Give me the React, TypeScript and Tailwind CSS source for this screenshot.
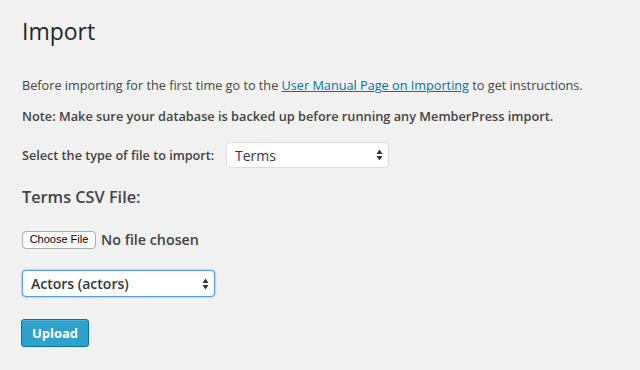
import React from "react";

function Arrows() {
  return (
    <svg width="7" height="12" viewBox="0 0 7 12" className="shrink-0">
      <path d="M3.5 0.5 L6.5 5 L0.5 5 Z" fill="#333" />
      <path d="M3.5 11.5 L6.5 7 L0.5 7 Z" fill="#333" />
    </svg>
  );
}

export default function App() {
  return (
    <div
      className="w-[640px] h-[370px] bg-[#f1f1f1] text-[#444] overflow-hidden"
      style={{ fontFamily: '"Open Sans", sans-serif' }}
    >
      <div className="pl-[22px] pt-[14px] flex flex-col items-start">
        <h2 className="text-[23px] leading-[34px] text-[#23282d] font-normal">Import</h2>
        <p className="mt-[27px] text-[12.7px] leading-[20px]">
          Before importing for the first time go to the{" "}
          <a href="#" className="text-[#0074a2] underline">User Manual Page on Importing</a> to get
          instructions.
        </p>
        <p className="mt-[11px] text-[12.75px] leading-[20px] font-semibold">
          Note: Make sure your database is backed up before running any MemberPress import.
        </p>
        <div className="mt-[16px] flex items-center">
          <span className="text-[12.65px] font-semibold w-[204px]">Select the type of file to import:</span>
          <div className="w-[163px] h-[26px] bg-white border border-[#ddd] rounded-[4px] flex items-center justify-between pl-[8px] pr-[5px]">
            <span className="text-[14px] text-[#32373c]">Terms</span>
            <Arrows />
          </div>
        </div>
        <h3 className="mt-[18px] text-[16.3px] leading-[22px] font-semibold">Terms CSV File:</h3>
        <div className="mt-[21px] flex items-center">
          <div
            className="w-[74px] h-[18px] bg-white border border-[#aaa] rounded-[4px] flex items-center justify-center text-[11px] text-black"
            style={{ fontFamily: '"Liberation Sans", Arial, sans-serif' }}
          >
            Choose File
          </div>
          <span className="ml-[5px] text-[14.3px] font-semibold text-[#444]">No file chosen</span>
        </div>
        <div className="mt-[20px] w-[193px] h-[27px] bg-white border border-[#5b9dd9] rounded-[4px] shadow-[0_0_2px_rgba(30,140,190,0.8)] flex items-center justify-between pl-[8px] pr-[5px]">
          <span className="text-[14px] font-semibold text-[#32373c]">Actors (actors)</span>
          <Arrows />
        </div>
        <div className="mt-[22px] -ml-[1px] w-[68px] h-[28px] bg-[#2ea2cc] border border-[#0074a2] rounded-[3px] flex items-center justify-center text-white text-[13px] font-bold shadow-[inset_0_1px_0_rgba(120,200,230,0.5)]">
          Upload
        </div>
      </div>
    </div>
  );
}
